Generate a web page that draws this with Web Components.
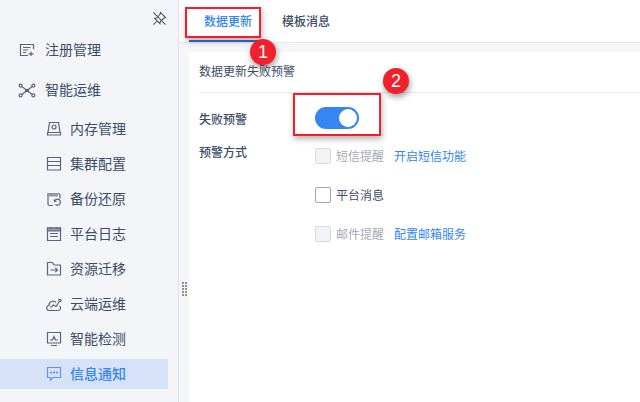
<!DOCTYPE html>
<html lang="zh">
<head>
<meta charset="utf-8">
<title>数据更新</title>
<style>
  html, body { margin: 0; height: 100%; overflow: hidden; background: #fff; }
  body { font: 14px "Noto Sans CJK SC", "Liberation Sans", sans-serif; color: #3d4d66; }
</style>
</head>
<body>
<app-shell>
  <side-nav slot="nav">
    <nav-item icon="register" level="1">注册管理</nav-item>
    <nav-item icon="ops" level="1" style="margin-bottom:1px">智能运维</nav-item>
    <nav-item icon="memory">内存管理</nav-item>
    <nav-item icon="cluster">集群配置</nav-item>
    <nav-item icon="backup">备份还原</nav-item>
    <nav-item icon="log">平台日志</nav-item>
    <nav-item icon="move">资源迁移</nav-item>
    <nav-item icon="cloud">云端运维</nav-item>
    <nav-item icon="detect">智能检测</nav-item>
    <nav-item icon="notice" active>信息通知</nav-item>
  </side-nav>
  <tab-bar slot="tabs">
    <tab-item active>数据更新</tab-item>
    <tab-item>模板消息</tab-item>
  </tab-bar>
  <setting-panel heading="数据更新失败预警">
    <form-row label="失败预警" style="--row-h:24px"><toggle-switch></toggle-switch></form-row>
    <form-row label="预警方式" style="margin-top:13px;--ctl-top:4px">
      <check-option disabled link="开启短信功能">短信提醒</check-option>
      <check-option link="">平台消息</check-option>
      <check-option disabled link="配置邮箱服务">邮件提醒</check-option>
    </form-row>
  </setting-panel>
  <call-out slot="marks" n="1" style="left:185px;top:7px;width:76px;height:31px" bx="78" by="45"></call-out>
  <call-out slot="marks" n="2" style="left:293px;top:93px;width:88px;height:43px" bx="103" by="-12"></call-out>
</app-shell>

<script>
// 16px line icons for the side navigation
const ICONS = {
  register: '<path d="M13.500 8V3.500H.5v11H8M3 6.500h7.500M3 9h5M3 11.500h3M11 10.500V15M8.500 12.800h5"/>',
  ops: '<circle cx=".6" cy="4.600" r="1.500"/><circle cx="13.400" cy="4.600" r="1.500"/><circle cx=".6" cy="14.400" r="1.500"/><circle cx="13.400" cy="14.400" r="1.500"/><path d="M1.800 5.600l10.400 7.800M12.200 5.600L1.800 13.400"/><ellipse cx="7" cy="9.500" rx="1.500" ry="1.100"/>',
  memory: '<path d="M3.500 2.500h9l1.500 10H2z"/><path d="M1.500 12.500v2.500h13v-2.500"/><circle cx="8" cy="7" r="2"/>',
  cluster: '<path d="M1.500 2.500h13V15h-13zM1.500 6.500h13M1.500 10.500h13"/>',
  backup: '<path d="M7 15.500H3.500Q2 15.500 2 14V3.500h10q2 0 2 2v3"/><path d="M2 3h10v3.500H2z" fill="#8f99ab" stroke="none"/><path d="M8.500 11.500a3 3 0 1 1 1 3M8 9.500l.5 2 2-.5"/>',
  log: '<path d="M1.500 3h13v12.500h-13zM5 2v2M11 2v2M4 8.500h8M4 11.500h8"/><path d="M1.500 3h13v3h-13z" fill="#8f99ab"/>',
  move: '<path d="M1.500 2.500h5L8 5h6.500v10h-13zM4.500 10h7M9.300 7.800l2.200 2.200-2.200 2.200"/>',
  cloud: '<path d="M5 15.500H3.500a2.500 2.500 0 0 1-.5-5 4 4 0 0 1 7-3M5 15.500h7.500a2.500 2.500 0 0 0 1-4.500M4.500 12.500L7.500 10l2.500 1.500L13 7"/><circle cx="14" cy="5.500" r="1.200"/>',
  detect: '<path d="M1.500 2.500h13V13h-13zM5 15.500h6M4 10h2.500L8 6.500 9.500 10H12"/>',
  notice: '<path d="M1.500 1.500h13v10H7L4.500 14v-2.500h-3z"/><g fill="currentColor" stroke="none"><circle cx="5" cy="6.500" r=".9"/><circle cx="8" cy="6.500" r=".9"/><circle cx="11" cy="6.500" r=".9"/></g>',
};

class AppShell extends HTMLElement {
  constructor() {
    super();
    this.attachShadow({ mode: 'open' }).innerHTML = `
      <style>
        :host { display: block; position: relative; width: 640px; height: 402px; overflow: hidden; }
        .wrap { display: flex; height: 100%; }
        .main { flex: 1; display: flex; flex-direction: column; min-width: 0; }
        .body { flex: 1; display: flex; background: #f5f6f9; padding: 9px 0 0 10px; position: relative; }
        .grip { position: absolute; left: 3px; top: 239px; width: 6px; height: 14px;
                background: radial-gradient(circle at 1px 1px, #9a8f7f 1px, transparent 1.2px) 0 0 / 3px 3px; }
      </style>
      <div class="wrap">
        <slot name="nav"></slot>
        <div class="main">
          <slot name="tabs"></slot>
          <div class="body"><div class="grip"></div><slot></slot></div>
        </div>
      </div>
      <slot name="marks"></slot>`;
  }
}

class SideNav extends HTMLElement {
  constructor() {
    super();
    this.attachShadow({ mode: 'open' }).innerHTML = `
      <style>
        :host { display: block; flex: none; box-sizing: border-box; width: 179px; height: 402px;
                background: #f3f5f9; border-right: 1px solid #e0e3ea; padding: 29px 10px 0 0; position: relative; }
        .pin { position: absolute; left: 152px; top: 11px; width: 15px; height: 15px; fill: none; stroke: #4a5568; stroke-width: 1.1; }
      </style>
      <svg class="pin" viewBox="0 0 16 16">
        <path d="M9 1.500l5.500 5.500-2 .8-3.500 3.200-.5 2.500L2.800 7.700l2.500-.5L8.500 3.500z"/>
        <path d="M1.500 1.500l13 13M5 11l-3.500 3.500"/>
      </svg>
      <slot></slot>`;
  }
}

class NavItem extends HTMLElement {
  constructor() {
    super();
    const top = this.getAttribute('level') === '1';
    const active = this.hasAttribute('active');
    this.attachShadow({ mode: 'open' }).innerHTML = `
      <style>
        :host { display: flex; align-items: center; box-sizing: border-box; height: ${top ? 40 : 35}px; font-size: 14px;
                padding-left: ${top ? 20 : 46}px; color: ${active ? '#3685f2' : '#3d4d66'}; }
        :host([active]) { height: 30px; margin-top: 4px; padding-bottom: 2px; background: #d6e2f7; font-weight: 500; }
        svg { width: 16px; height: 16px; flex: none; overflow: visible; margin-right: ${top ? 9 : 8}px;
              margin-top: ${top ? 0 : active ? 2 : 1}px; fill: none; color: #3685f2;
              stroke: ${active ? '#5f93f5' : '#5b6579'}; stroke-width: 1.2; }
      </style>
      <svg viewBox="0 0 16 16">${ICONS[this.getAttribute('icon')] || ''}</svg><slot></slot>`;
  }
}

class TabBar extends HTMLElement {
  constructor() {
    super();
    this.attachShadow({ mode: 'open' }).innerHTML = `
      <style>
        :host { display: flex; box-sizing: border-box; height: 43px; padding-left: 10px; background: #fff;
                border-bottom: 1px solid #e6e8ee; }
      </style>
      <slot></slot>`;
  }
}

class TabItem extends HTMLElement {
  constructor() {
    super();
    this.attachShadow({ mode: 'open' }).innerHTML = `
      <style>
        :host { display: block; box-sizing: border-box; height: 42px; padding: 0 15px 0 21px; line-height: 42px;
                font-size: 12px; font-weight: 500; color: #3d4d66; }
        :host([active]) { padding: 0 9px 0 15px; color: #3685f2; border-bottom: 2px solid #3371d8; }
      </style>
      <slot></slot>`;
  }
}

class SettingPanel extends HTMLElement {
  constructor() {
    super();
    this.attachShadow({ mode: 'open' }).innerHTML = `
      <style>
        :host { display: block; flex: 1; background: #fff; padding: 0 0 0 10px; font-size: 12px; }
        h2 { margin: 0 0 14px; height: 40px; line-height: 38px; font-size: 12px; font-weight: 400;
             color: #3d4d66; border-bottom: 1px solid #e6e8ee; box-sizing: content-box; }
      </style>
      <h2>${this.getAttribute('heading')}</h2>
      <slot></slot>`;
  }
}

class FormRow extends HTMLElement {
  constructor() {
    super();
    this.attachShadow({ mode: 'open' }).innerHTML = `
      <style>
        :host { display: flex; align-items: flex-start; }
        label { flex: none; width: 116px; font-weight: 500; color: #3d4d66; line-height: var(--row-h, 16px); }
        .ctl { display: flex; flex-direction: column; gap: 23px; margin-top: var(--ctl-top, 0); }
      </style>
      <label>${this.getAttribute('label')}</label>
      <div class="ctl"><slot></slot></div>`;
  }
}

class ToggleSwitch extends HTMLElement {
  constructor() {
    super();
    this.attachShadow({ mode: 'open' }).innerHTML = `
      <style>
        :host { display: flex; justify-content: flex-end; align-items: center; box-sizing: border-box;
                width: 44px; height: 22px; padding-right: 2px; border-radius: 11px; background: #3685f2; }
        i { width: 18px; height: 18px; border-radius: 50%; background: #fff; }
      </style>
      <i></i>`;
  }
}

class CheckOption extends HTMLElement {
  constructor() {
    super();
    const link = this.getAttribute('link');
    this.attachShadow({ mode: 'open' }).innerHTML = `
      <style>
        :host { display: flex; align-items: center; height: 16px; line-height: 16px; font-size: 12px; color: #3d4d66; }
        :host([disabled]) { color: #a6abb5; }
        i { box-sizing: border-box; flex: none; width: 16px; height: 16px; margin-right: 5px; border: 1px solid #9ea5b4;
            border-radius: 2px; background: #fff; }
        :host([disabled]) i { border-color: #d8dbe2; background: #f2f3f7; }
        a { margin-left: 10px; color: #3685f2; text-decoration: none; }
      </style>
      <i></i><slot></slot>${link ? `<a>${link}</a>` : ''}`;
  }
}

// red annotation box with its numbered badge
class CallOut extends HTMLElement {
  constructor() {
    super();
    const bx = this.getAttribute('bx'), by = this.getAttribute('by');
    this.attachShadow({ mode: 'open' }).innerHTML = `
      <style>
        :host { display: block; position: absolute; box-sizing: border-box; border: 2px solid #f21f2b;
                box-shadow: 1px 3px 6px rgba(0,0,0,.3); pointer-events: none; }
        b { position: absolute; left: ${bx - 15}px; top: ${by - 15}px; width: 26px; height: 26px; border-radius: 50%;
            background: #f0202c; color: #fff; font: 400 18px/26px "Liberation Sans", sans-serif; text-align: center;
            box-shadow: 1px 3px 6px rgba(0,0,0,.4); }
      </style>
      <b>${this.getAttribute('n')}</b>`;
  }
}

customElements.define('app-shell', AppShell);
customElements.define('side-nav', SideNav);
customElements.define('nav-item', NavItem);
customElements.define('tab-bar', TabBar);
customElements.define('tab-item', TabItem);
customElements.define('setting-panel', SettingPanel);
customElements.define('form-row', FormRow);
customElements.define('toggle-switch', ToggleSwitch);
customElements.define('check-option', CheckOption);
customElements.define('call-out', CallOut);
</script>
</body>
</html>
